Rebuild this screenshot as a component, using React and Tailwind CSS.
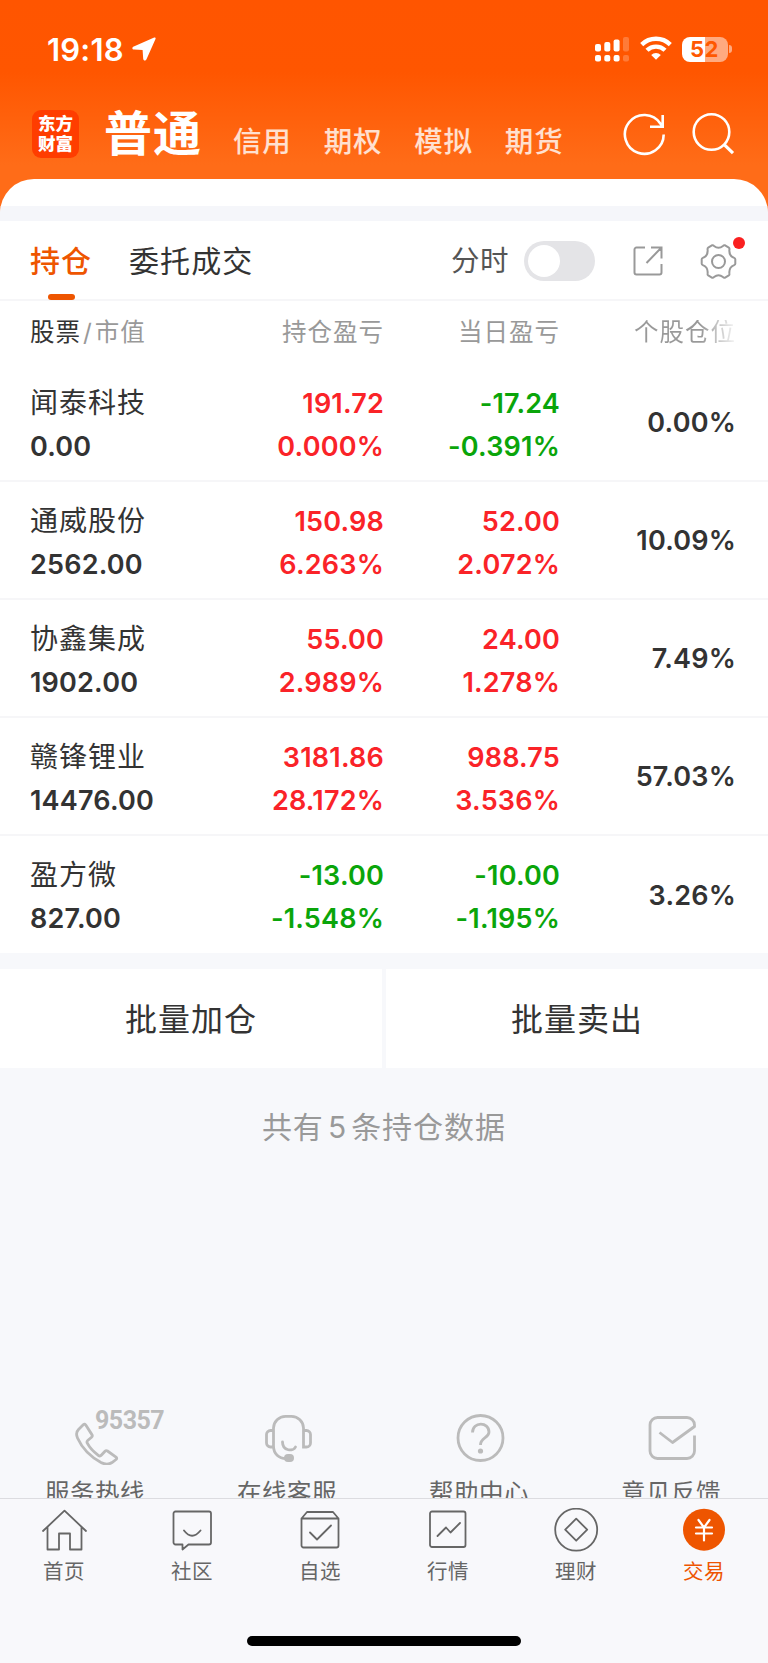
import React from "react";

const stocks = [
  { name: "闻泰科技", value: "0.00", pl: "191.72", plPct: "0.000%", day: "-17.24", dayPct: "-0.391%", share: "0.00%" },
  { name: "通威股份", value: "2562.00", pl: "150.98", plPct: "6.263%", day: "52.00", dayPct: "2.072%", share: "10.09%" },
  { name: "协鑫集成", value: "1902.00", pl: "55.00", plPct: "2.989%", day: "24.00", dayPct: "1.278%", share: "7.49%" },
  { name: "赣锋锂业", value: "14476.00", pl: "3181.86", plPct: "28.172%", day: "988.75", dayPct: "3.536%", share: "57.03%" },
  { name: "盈方微", value: "827.00", pl: "-13.00", plPct: "-1.548%", day: "-10.00", dayPct: "-1.195%", share: "3.26%" },
];

function StatusBar() {
  return (
    <div className="flex h-[98px] items-center pl-[47px] pr-[36px] text-white">
      <span className="w-[77px] whitespace-nowrap text-[31px] font-semibold leading-none tracking-[0.2px]">19:18</span>
      <svg className="ml-[8px]" width="24" height="24" viewBox="0 0 24 24" fill="#fff">
        <path d="M22.2.5 1.8 9.4C-.2 10.300-.1 12.400 2 12.500L10.600 12.900 11.200 21.700C11.400 23.900 13.600 24.200 14.500 22.200L23.500 2.100C23.900 1 23.300.1 22.200.5Z" />
      </svg>
      <svg className="ml-auto" width="34" height="25" viewBox="0 0 34 25" fill="#fff">
        <rect x="0" y="7" width="6" height="7.500" rx="2" />
        <rect x="9.300" y="5" width="6" height="9.500" rx="2" />
        <rect x="18.600" y="2.500" width="6" height="12" rx="2" />
        <rect x="28" y="0" width="6" height="14.500" rx="2" opacity=".22" />
        <rect x="0" y="18" width="6" height="6.500" rx="2" />
        <rect x="9.300" y="18" width="6" height="6.500" rx="2" />
        <rect x="18.600" y="18" width="6" height="6.500" rx="2" />
        <rect x="28" y="18" width="6" height="6.500" rx="2" opacity=".22" />
      </svg>
      <svg className="ml-[11px] mb-[2px]" width="32" height="24" viewBox="0 0 32 24" fill="none" stroke="#fff" strokeWidth="4.400">
        <path d="M1.700 8.600A20.500 20.500 0 0 1 30.300 8.600" />
        <path d="M7 14.300A12.800 12.800 0 0 1 25 14.300" />
        <path d="M16 23.700 11.200 19A6.800 6.800 0 0 1 20.800 19Z" fill="#fff" stroke="none" />
      </svg>
      <div className="ml-[10px] flex items-center">
        <div className="flex h-[25px] w-[46px] items-center justify-center rounded-[8px] bg-[linear-gradient(90deg,#fff_51%,#ffaa80_51%)] text-[22px] font-bold leading-none tracking-[0.5px] text-[#ff5800]">
          <span>52</span>
        </div>
        <div className="ml-[1.500px] h-[8px] w-[3px] rounded-r-full bg-[#ffaa80]" />
      </div>
    </div>
  );
}

function Header() {
  return (
    <header className="h-[221px] bg-[linear-gradient(180deg,#ff5500_0px,#ff5600_72px,#ff6c18_165px,#ff6c18_221px)]">
      <StatusBar />
      <div className="flex h-[81px] items-start pl-[32px] text-white">
        <div className="mt-[12px] flex h-[48px] w-[47px] flex-col items-center justify-center rounded-[9px] bg-[#ff3d00] text-[17.500px] font-black leading-[20px]">
          <span>东方</span>
          <span>财富</span>
        </div>
        <span className="ml-[25px] mt-[12px] text-[48px] font-bold leading-[48px] tracking-[1px]">普通</span>
        <nav className="ml-[31px] mt-[29px] flex gap-[32px] text-[28.500px] font-medium leading-[30px] tracking-[0.800px] text-white/80">
          <span>信用</span>
          <span>期权</span>
          <span>模拟</span>
          <span>期货</span>
        </nav>
        <svg className="ml-auto mt-[14px]" width="44" height="44" viewBox="0 0 44 44" fill="none" stroke="#fff" strokeWidth="2.600">
          <path d="M40.700 22.500A19.400 19.400 0 1 1 37.500 11.700L39.700 14.500M39.700 3v11.700H27" />
        </svg>
        <svg className="ml-[24px] mr-[33px] mt-[14px]" width="44" height="44" viewBox="0 0 44 44" fill="none" stroke="#fff" strokeWidth="2.600">
          <circle cx="20.500" cy="20" r="17.800" />
          <path d="M32.700 32.200 42 41.200" strokeWidth="3.200" />
        </svg>
      </div>
      <div className="h-[42px] overflow-hidden rounded-t-[34px] bg-white pt-[27px]">
        <div className="h-[15px] bg-[#f5f6fa]" />
      </div>
    </header>
  );
}

function Tabs() {
  return (
    <div className="flex h-[80px] border-b-2 border-[#f6f6f8] pl-[30px] pt-[2px]">
      <div className="relative flex w-[64px] items-center whitespace-nowrap text-[30px] font-medium leading-none tracking-[1px] text-[#ee5500]">
        <span>持仓</span>
        <div className="absolute -bottom-[1px] left-[18px] h-[6px] w-[27px] rounded-full bg-[#ee5500]" />
      </div>
      <span className="ml-[35px] self-center text-[30px] leading-none tracking-[1.100px] text-[#333]">委托成交</span>
      <span className="ml-auto self-center pt-[1px] text-[28.500px] leading-none tracking-[0.500px] text-[#555]">分时</span>
      <div className="ml-[15px] flex h-[40px] w-[71px] items-center self-center rounded-full bg-[#e4e4e7] pl-[4px]">
        <div className="size-[32px] rounded-full bg-white" />
      </div>
      <svg className="ml-[37px] self-center" width="32" height="32" viewBox="0 0 32 32" fill="none" stroke="#999" strokeWidth="2">
        <path d="M13 2.500H4.500a2 2 0 0 0-2 2V27.500a2 2 0 0 0 2 2H27.500a2 2 0 0 0 2-2V19M19 2.500H29.500V13.500M29 3 14.500 18" />
      </svg>
      <div className="relative ml-[36px] mr-[31px] self-center">
        <svg width="37" height="37" viewBox="0 0 37 37" fill="none" stroke="#999" strokeWidth="2" strokeLinejoin="round">
          <path d="M12.300 2.200Q13.200 2 14 2.900Q18.500 6.600 23 2.900Q23.800 2 24.700 2.200L28.800 4.600Q29.700 5.200 29.400 6.600Q28.800 13 34.200 14.900Q35.300 15.300 35.300 16.200V20.800Q35.300 21.700 34.200 22.100Q28.800 24 29.400 30.400Q29.700 31.800 28.800 32.400L24.700 34.800Q23.800 35 23 34.100Q18.500 30.400 14 34.100Q13.200 35 12.300 34.800L8.200 32.400Q7.300 31.800 7.600 30.400Q8.200 24 2.800 22.100Q1.700 21.700 1.700 20.800V16.200Q1.700 15.300 2.800 14.900Q8.200 13 7.600 6.600Q7.300 5.200 8.200 4.600Z" />
          <circle cx="18.500" cy="18.500" r="6.500" />
        </svg>
        <div className="absolute -right-[8px] -top-[6px] size-[12px] rounded-full bg-[#fa2020]" />
      </div>
    </div>
  );
}

function Money({ top, bottom }) {
  const color = top.startsWith("-") ? "text-[#0aa50a]" : "text-[#fa2328]";
  return (
    <div className={`flex flex-col items-end leading-[43px] ${color}`}>
      <span>{top}</span>
      <span>{bottom}</span>
    </div>
  );
}

function Holdings() {
  return (
    <section className="bg-white">
      <div className="grid h-[63px] grid-cols-[172px_182px_176px_176px] items-center pl-[30px] text-[24.500px] leading-none tracking-[1px] text-[#999]">
        <span><span className="text-[#333]">股票</span><span className="mx-[2px]">/</span>市值</span>
        <span className="text-right">持仓盈亏</span>
        <span className="text-right">当日盈亏</span>
        <span className="bg-[linear-gradient(90deg,#999_80%,#fff_102%)] bg-clip-text text-right text-transparent">个股仓位</span>
      </div>
      {stocks.map((s, i) => (
        <div
          key={s.name}
          className={`grid grid-cols-[172px_182px_176px_176px] items-center pl-[30px] pt-[5px] text-[27px] font-semibold tracking-[0.200px] ${i < stocks.length - 1 ? "h-[118px] border-b-2 border-[#f6f6f8]" : "h-[117px]"}`}
        >
          <div className="flex flex-col leading-[43px] text-[#333]">
            <span className="text-[28px] font-normal tracking-[1px]">{s.name}</span>
            <span>{s.value}</span>
          </div>
          <Money top={s.pl} bottom={s.plPct} />
          <Money top={s.day} bottom={s.dayPct} />
          <span className="pb-[2px] text-right text-[#333]">{s.share}</span>
        </div>
      ))}
    </section>
  );
}

const services = [
  {
    label: "服务热线",
    icon: (
      <path d="M11.500 11.500 6.500 16.500C4.500 18.500 4 21.500 5.500 25C10.500 36 19 44 29 49.500C33 51.500 37 51.500 40 49.500L44 46.500C45 45.500 45 44.800 44 44L35.500 38C34.500 37.400 33.800 37.400 33 38.200L29.500 42C28.500 43.200 27.500 43.200 26.300 42.300C21.500 38.800 17.500 34.500 15.300 30.200C14.700 29 14.800 28.300 15.700 27.500L19.500 24.300C20.500 23.300 20.600 22.600 19.900 21.600L13.800 12C13 11 12.300 10.800 11.500 11.500Z" />
    ),
  },
  {
    label: "在线客服",
    icon: (
      <>
        <path d="M9.500 17.500V33C9.500 41 15 45.500 22 45.500M9.500 34H6.500A4 4 0 0 1 2.500 30V21.500A4 4 0 0 1 6.500 17.500H9.500V15A12 12 0 0 1 21.500 3.300H27.500A12 12 0 0 1 39.500 15V17.500H42.500A4 4 0 0 1 46.500 21.500V30A4 4 0 0 1 42.500 34H39.500V17.500M18.500 29C18.500 38.500 29.500 38.500 31.500 34" strokeLinecap="round" />
        <rect x="20" y="41" width="10" height="8" rx="4" fill="#bbb" stroke="none" />
      </>
    ),
  },
  {
    label: "帮助中心",
    icon: (
      <>
        <circle cx="24.500" cy="25" r="22.500" />
        <path d="M16.500 19.500C16.500 8.500 33 8.500 33 19C33 25 24.500 24.500 24.500 32" />
        <circle cx="24.500" cy="38" r="2.600" fill="#bbb" stroke="none" />
      </>
    ),
  },
  {
    label: "意见反馈",
    icon: (
      <path d="M46.500 22.500V38A7.500 7.500 0 0 1 39 45.500H9.500A7.500 7.500 0 0 1 2 38V12A7.500 7.500 0 0 1 9.500 4.500H39A7.500 7.500 0 0 1 46.500 12V13.500L24.500 29.500 11.500 19.500" strokeLinejoin="round" />
    ),
  },
];

const tabs = [
  { label: "首页", icon: <path d="M2 23 23.500 2.700 45 23M6.500 19V41.500H18V25.500H29V41.500H40.500V19" /> },
  {
    label: "社区",
    icon: <path d="M6.500 3.500H40A2 2 0 0 1 42 5.500V34.500A2 2 0 0 1 40 36.500H19.500L13.500 41.500V36.500H6.500A2 2 0 0 1 4.500 34.500V5.500A2 2 0 0 1 6.500 3.500ZM15 22.500Q23 33 31.500 22.500" />,
  },
  {
    label: "自选",
    icon: <path d="M4.500 10.500 10 4H36L41.500 10.500V37.500A2 2 0 0 1 39.500 39.500H6.500A2 2 0 0 1 4.500 37.500ZM4.500 10.500H41.500M13 24.500 20 31.500 34 17.500" />,
  },
  {
    label: "行情",
    icon: <path d="M7 3.500H38.500A2 2 0 0 1 40.500 5.500V37A2 2 0 0 1 38.500 39H7A2 2 0 0 1 5 37V5.500A2 2 0 0 1 7 3.500ZM12.500 28 21 19.500 25.500 24.500 35 15" />,
  },
  {
    label: "理财",
    icon: (
      <>
        <circle cx="23.200" cy="21.700" r="21" />
        <path d="M23.200 10.700 34.200 21.700 23.200 32.700 12.200 21.700Z" />
      </>
    ),
  },
  {
    label: "交易",
    active: true,
    icon: (
      <>
        <circle cx="23" cy="21.700" r="21" fill="#ee5500" stroke="none" />
        <path d="M17.500 12 23 19.500 28.500 12M23 19V32.500M15 19.500H31M15 25.500H31" stroke="#fff" strokeWidth="2.200" />
      </>
    ),
  },
];

export default function App() {
  return (
    <div className="flex h-[1663px] w-[768px] flex-col overflow-hidden bg-[#f7f8fb] font-['Inter','Noto_Sans_CJK_SC',sans-serif]">
      <Header />
      <main className="flex h-[1277px] flex-col overflow-hidden">
        <div className="bg-white"><Tabs /></div>
        <Holdings />
        <div className="mt-[16px] flex h-[99px] shrink-0 gap-[4px] text-[32px] leading-[101px] tracking-[1px] text-[#333]">
          <span className="flex-1 bg-white text-center">批量加仓</span>
          <span className="flex-1 bg-white text-center">批量卖出</span>
        </div>
        <p className="mt-[43px] text-center text-[30px] leading-[32px] tracking-[1px] text-[#999]">
          共有<span className="mx-[4px]">5</span>条持仓数据
        </p>
        <div className="mt-[270px] grid shrink-0 grid-cols-4">
          {services.map((s, i) => (
            <div key={s.label} className="relative flex flex-col items-center">
              <svg width="49" height="52" viewBox="0 0 49 52" fill="none" stroke="#bbb" strokeWidth="2.800">
                {s.icon}
              </svg>
              {i === 0 && (
                <span className="absolute left-[95px] top-[-5px] font-['Roboto'] text-[25px] font-bold leading-[25px] tracking-[-0.500px] text-[#bbb]">
                  95357
                </span>
              )}
              <span className="mr-[2px] mt-[14px] text-[24.500px] leading-[28px] tracking-[0.500px] text-[#666]">{s.label}</span>
            </div>
          ))}
        </div>
      </main>
      <footer className="flex h-[165px] flex-col items-center border-t border-[#dcdce0] bg-[#f8f8fb]">
        <div className="grid w-full grid-cols-6 pt-[9px]">
          {tabs.map((t) => (
            <div key={t.label} className={`flex flex-col items-center ${t.active ? "text-[#ee5500]" : "text-[#666]"}`}>
              <svg width="47" height="44" viewBox="0 0 47 44" fill="none" stroke="currentColor" strokeWidth="1.800" strokeLinejoin="round" strokeLinecap="round">
                {t.icon}
              </svg>
              <span className="mt-[8px] text-[20.500px] leading-[24px] tracking-[0.600px]">{t.label}</span>
            </div>
          ))}
        </div>
        <div className="mt-auto mb-[17px] h-[10px] w-[274px] rounded-full bg-black" />
      </footer>
    </div>
  );
}
